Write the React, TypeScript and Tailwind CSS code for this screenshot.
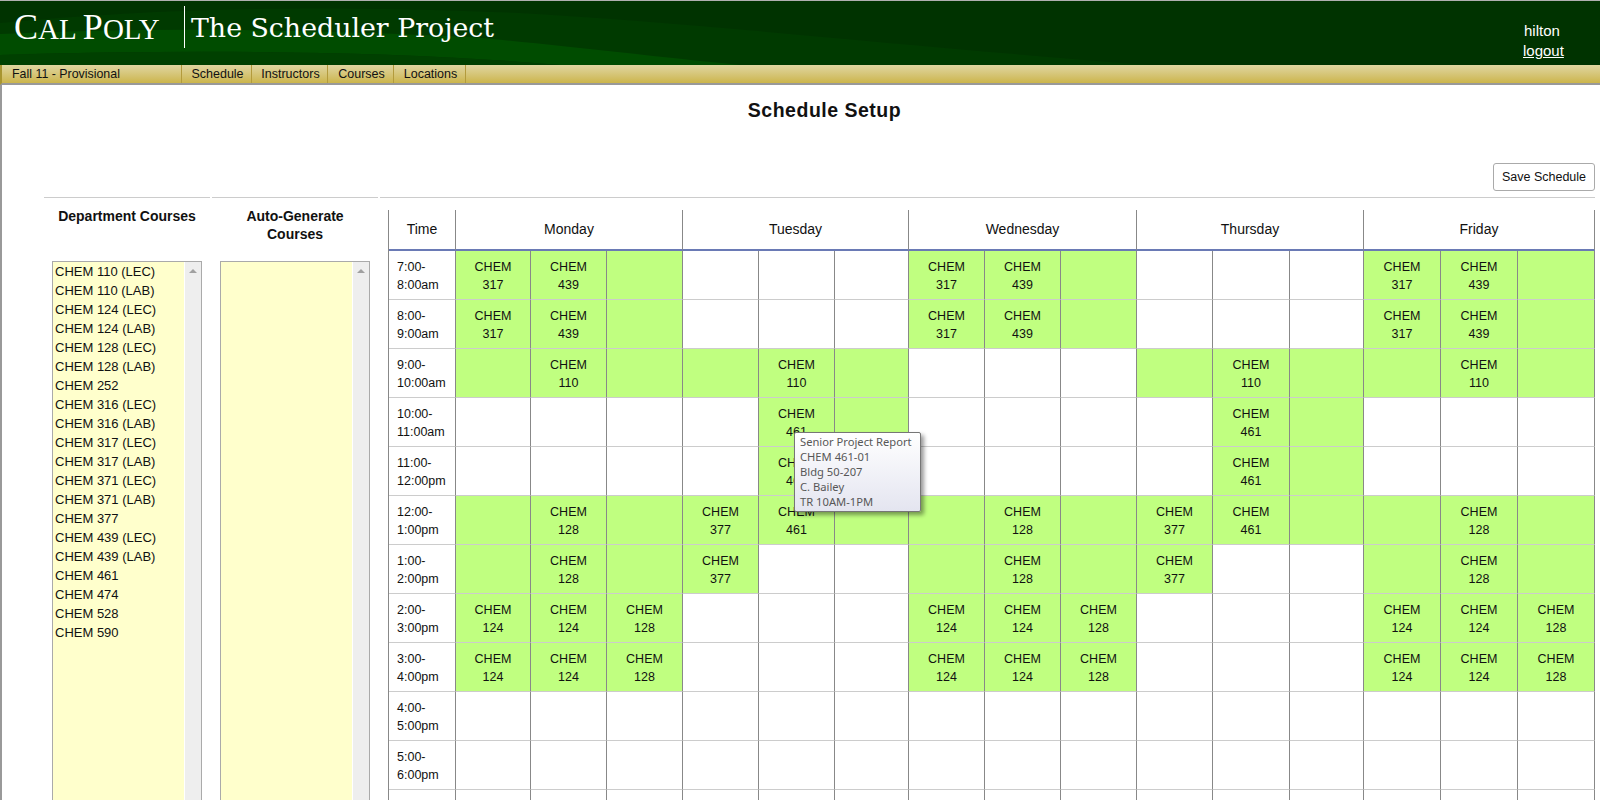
import React from 'react';

const COURSES = [
    'CHEM 110 (LEC)',
    'CHEM 110 (LAB)',
    'CHEM 124 (LEC)',
    'CHEM 124 (LAB)',
    'CHEM 128 (LEC)',
    'CHEM 128 (LAB)',
    'CHEM 252',
    'CHEM 316 (LEC)',
    'CHEM 316 (LAB)',
    'CHEM 317 (LEC)',
    'CHEM 317 (LAB)',
    'CHEM 371 (LEC)',
    'CHEM 371 (LAB)',
    'CHEM 377',
    'CHEM 439 (LEC)',
    'CHEM 439 (LAB)',
    'CHEM 461',
    'CHEM 474',
    'CHEM 528',
    'CHEM 590',
];

const NAV_ITEMS = [
    { label: 'Schedule', width: 'w-[70px]' },
    { label: 'Instructors', width: 'w-[76px]' },
    { label: 'Courses', width: 'w-[66px]' },
    { label: 'Locations', width: 'w-[72px]' },
];

// null = white cell, '' = green cell with no course, otherwise the course number
type Slot = string | null;
type Day = [Slot, Slot, Slot];

const WHITE: Day = [null, null, null];
const MWF_317: Day = ['317', '439', ''];
const MWF_110: Day = ['', '110', ''];
const MWF_128: Day = ['', '128', ''];
const MWF_124: Day = ['124', '124', '128'];
const TR_461: Day = [null, '461', ''];

const ROWS: { time: string[]; days: Day[] }[] = [
    { time: ['7:00-', '8:00am'], days: [MWF_317, WHITE, MWF_317, WHITE, MWF_317] },
    { time: ['8:00-', '9:00am'], days: [MWF_317, WHITE, MWF_317, WHITE, MWF_317] },
    { time: ['9:00-', '10:00am'], days: [MWF_110, MWF_110, WHITE, MWF_110, MWF_110] },
    { time: ['10:00-', '11:00am'], days: [WHITE, TR_461, WHITE, TR_461, WHITE] },
    { time: ['11:00-', '12:00pm'], days: [WHITE, TR_461, WHITE, TR_461, WHITE] },
    { time: ['12:00-', '1:00pm'], days: [MWF_128, ['377', '461', ''], MWF_128, ['377', '461', ''], MWF_128] },
    { time: ['1:00-', '2:00pm'], days: [MWF_128, ['377', null, null], MWF_128, ['377', null, null], MWF_128] },
    { time: ['2:00-', '3:00pm'], days: [MWF_124, WHITE, MWF_124, WHITE, MWF_124] },
    { time: ['3:00-', '4:00pm'], days: [MWF_124, WHITE, MWF_124, WHITE, MWF_124] },
    { time: ['4:00-', '5:00pm'], days: [WHITE, WHITE, WHITE, WHITE, WHITE] },
    { time: ['5:00-', '6:00pm'], days: [WHITE, WHITE, WHITE, WHITE, WHITE] },
];

const DAYS = ['Monday', 'Tuesday', 'Wednesday', 'Thursday', 'Friday'];

const CourseList = ({ items }: { items: string[] }) => (
    <div className="flex h-[620px] w-[150px] border border-[#aaaaaa] bg-[#ffffcc] text-[13px] leading-[19px] text-[#111111]">
        <ul className="flex-1 pl-[2px]">
            {items.map((item) => (
                <li key={item}>{item}</li>
            ))}
        </ul>
        <div className="flex w-[17px] justify-center border-l border-white bg-[#eeeeee] pt-[7px]">
            <div className="h-0 w-0 border-x-[4px] border-b-[4px] border-x-transparent border-b-[#a0a0a0]" />
        </div>
    </div>
);

const Tooltip = () => (
    <div className="absolute left-[405px] top-[222px] z-10 h-[80px] w-[127px] rounded-[2px] border border-[#767676] bg-gradient-to-b from-white to-[#e4e5f0] pl-[5px] pt-[1px] font-['Noto_Sans',sans-serif] text-[11.2px] leading-[15px] text-[#575757] shadow-[3px_3px_4px_rgba(0,0,0,0.4)]">
        <div>Senior Project Report</div>
        <div>CHEM 461-01</div>
        <div>Bldg 50-207</div>
        <div>C. Bailey</div>
        <div>TR 10AM-1PM</div>
    </div>
);

const ScheduleGrid = () => (
    <div className="relative w-[1207px] border-l border-[#888888] text-[12.5px] text-[#111111]">
        <div className="grid grid-cols-[67px_75px_76px_76px_76px_76px_74px_76px_76px_76px_76px_77px_74px_77px_77px_77px]">
            <div className="flex h-[41px] items-center justify-center border-b-2 border-r border-b-[#6a7ab5] border-r-[#888888] pb-[1px] text-[14px]">
                Time
            </div>
            {DAYS.map((day) => (
                <div
                    key={day}
                    className="col-span-3 flex h-[41px] items-center justify-center border-b-2 border-r border-b-[#6a7ab5] border-r-[#888888] pb-[1px] text-[14px]"
                >
                    {day}
                </div>
            ))}
            {ROWS.map((row) => (
                <React.Fragment key={row.time[0]}>
                    <div className="h-[49px] border-b border-r border-b-[#cccccc] border-r-[#888888] pl-[8px] pt-[7px] leading-[18px]">
                        {row.time.map((line) => (
                            <div key={line}>{line}</div>
                        ))}
                    </div>
                    {row.days.flat().map((slot, i) => (
                        <div
                            key={i}
                            className={`h-[49px] border-b border-r border-b-[#cccccc] border-r-[#888888] pt-[7px] text-center leading-[18px] ${
                                slot === null ? 'bg-white' : 'bg-[#c0ff80]'
                            }`}
                        >
                            {slot ? (
                                <>
                                    <div>CHEM</div>
                                    <div>{slot}</div>
                                </>
                            ) : null}
                        </div>
                    ))}
                </React.Fragment>
            ))}
            <div className="h-[49px] border-r border-r-[#888888]" />
            {Array.from({ length: 15 }, (_, i) => (
                <div key={i} className="h-[49px] border-r border-r-[#888888]" />
            ))}
        </div>
        <Tooltip />
    </div>
);

const App: React.FC = () => {
    return (
        <div className="h-[800px] w-[1600px] overflow-hidden bg-white font-['Liberation_Sans',Arial,sans-serif]">
            <header className="relative flex h-[65px] items-start overflow-hidden border-t border-[#b0b0b0] bg-[#003300] text-white">
                <svg className="absolute inset-0 h-full w-full" viewBox="0 0 1600 64" preserveAspectRatio="none">
                    <path d="M0 22 C150 8 300 3 520 12 C700 22 900 45 1150 64 L0 64 Z" fill="#003a00" />
                    <path d="M0 33 C150 26 300 28 470 36 C560 44 640 54 740 64 L560 64 C400 50 200 48 0 54 Z" fill="#004c00" />
                    <path d="M0 54 C200 48 400 50 560 64 L0 64 Z" fill="#004000" />
                </svg>
                <div className="relative ml-[14px] mt-[8px] w-[170px] font-['Liberation_Serif',serif] text-[29px] leading-[36px]">
                    <span className="text-[36px]">C</span>AL <span className="text-[36px]">P</span>OLY
                </div>
                <div className="relative mt-[5px] h-[42px] w-px bg-white" />
                <div className="relative ml-[6px] mt-[9px] font-['DejaVu_Serif',serif] text-[26.8px] leading-[36px]">
                    The Scheduler Project
                </div>
                <div className="relative ml-auto mr-[35px] mt-[20px] w-[42px] text-[15px] leading-[20px]">
                    <div className="pl-[1px]">hilton</div>
                    <a href="#" className="underline">
                        logout
                    </a>
                </div>
            </header>

            <nav className="flex h-[20px] border-b-2 border-l-2 border-b-[#999999] border-l-[#a89530] bg-gradient-to-b from-[#e0d6a0] to-[#ccb54a] text-[12.5px] leading-[18px] text-[#111111]">
                <div className="w-[180px] border-r border-[#b39b3c] pl-[10px] text-[12.4px]">Fall 11 - Provisional</div>
                {NAV_ITEMS.map((item) => (
                    <div key={item.label} className={`${item.width} border-r border-[#b39b3c] pl-[2px] text-center`}>
                        {item.label}
                    </div>
                ))}
            </nav>

            <main className="h-[715px] border-l-2 border-[#999999]">
                <h1 className="ml-[47px] pt-[13px] text-center text-[19.5px] font-bold leading-[24px] tracking-[0.5px] text-[#111111]">
                    Schedule Setup
                </h1>
                <div className="mt-[41px] flex justify-end pr-[5px]">
                    <button className="h-[28px] w-[102px] rounded-[3px] border border-[#aaaaaa] bg-white text-[12.5px] text-[#111111]">
                        Save Schedule
                    </button>
                </div>
                <div className="ml-[42px] mt-[6px] flex gap-[2px]">
                    <div className="h-px w-[166px] bg-[#cccccc]" />
                    <div className="h-px w-[166px] bg-[#cccccc]" />
                    <div className="h-px w-[1215px] bg-[#cccccc]" />
                </div>
                <div className="mt-[12px] flex">
                    <section className="ml-[50px] w-[150px]">
                        <h2 className="h-[51px] text-center text-[14px] font-bold leading-[18px] text-[#111111]">
                            <span className="relative -top-[3px]">Department Courses</span>
                        </h2>
                        <CourseList items={COURSES} />
                    </section>
                    <section className="ml-[18px] w-[150px]">
                        <h2 className="h-[51px] text-center text-[14px] font-bold leading-[18px] text-[#111111]">
                            <span className="relative -top-[3px]">
                                Auto-Generate
                                <br />
                                Courses
                            </span>
                        </h2>
                        <CourseList items={[]} />
                    </section>
                    <section className="ml-[18px]">
                        <ScheduleGrid />
                    </section>
                </div>
            </main>
        </div>
    );
};

export default App;
